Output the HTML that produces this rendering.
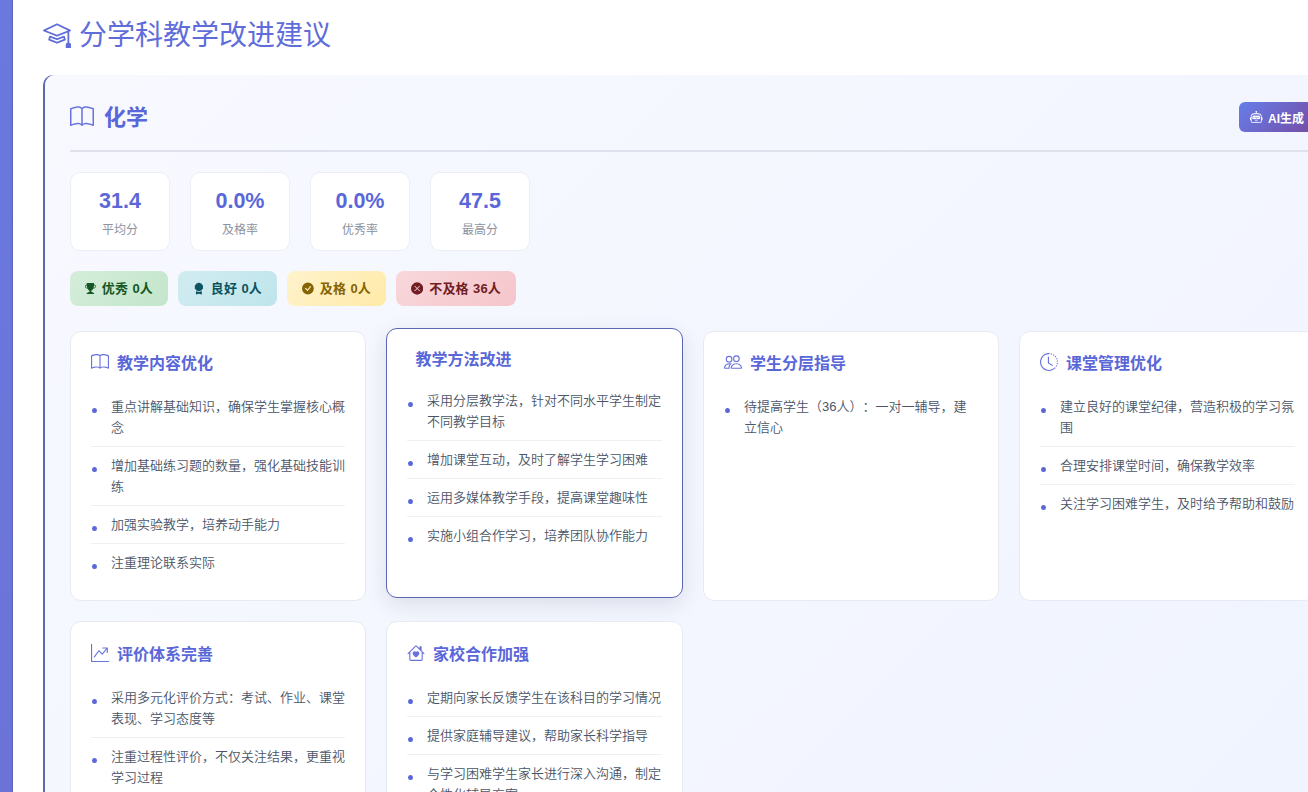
<!DOCTYPE html>
<html lang="zh-CN">
<head>
<meta charset="utf-8">
<title>分学科教学改进建议</title>
<style>
*{box-sizing:border-box;margin:0;padding:0}
html,body{width:1308px;height:792px;overflow:hidden}
body{position:relative;background:linear-gradient(180deg,#6a79de 0%,#6b73d8 100%);font-family:"Liberation Sans","Noto Sans CJK SC",sans-serif;color:#4a5568;text-spacing-trim:space-all}
svg{display:block;fill:currentColor}
.card h4 svg,.sub .ttl svg{color:#6873db}
.page{position:absolute;left:13px;top:0;width:1400px;height:792px;background:#fff;box-shadow:-1px 0 1px rgba(70,70,95,.3)}
.head{position:absolute;left:30px;top:14px;height:42px;display:flex;align-items:center;color:#5f6dda;white-space:nowrap}
.head svg{width:28px;height:28px;margin-right:8px;position:relative;top:-1px}
.head h2{font-size:28px;font-weight:400;line-height:42px;position:relative;top:1px}
.panel{position:absolute;left:32px;top:75px;width:1300px;height:760px;border-radius:10px;box-shadow:-2px 0 0 #5c68b0;background:linear-gradient(135deg,#f8f9ff 0%,#f0f4ff 100%)}
.sub{position:absolute;left:25px;top:0;right:0;height:77px;border-bottom:2px solid #dfe2ec}
.sub .ttl{position:absolute;left:0;top:28px;height:30px;display:flex;align-items:center;color:#5a67d8}
.sub .ttl svg{width:24px;height:24px;margin-right:10px;position:relative;top:-1px}
.sub .ttl b{font-size:22px;font-weight:700;line-height:30px}
.ai{position:absolute;left:1169px;top:27px;height:30px;padding:0 12px 0 11px;border-radius:6px;background:linear-gradient(135deg,#667eea 0%,#764ba2 100%);color:#fff;font-size:12px;font-weight:700;letter-spacing:0;display:flex;align-items:center;white-space:nowrap}
.ai svg{width:12.5px;height:12.5px;margin-right:5.5px;position:relative;top:.5px}
.stats{position:absolute;left:25px;top:97px;display:flex}
.stat{width:100px;height:79px;margin-right:20px;background:#fff;border:1px solid #eceef6;border-radius:10px;text-align:center}
.stat .v{margin-top:15px;font-size:21.5px;font-weight:700;line-height:26px;color:#5a67d8}
.stat .l{margin-top:8px;font-size:12px;line-height:16px;color:#8c929e}
.badges{position:absolute;left:25px;top:196px;display:flex}
.bd{height:35px;margin-right:10px;padding:0 15px;border-radius:8px;display:flex;align-items:center;font-size:13px;font-weight:700;word-spacing:.6px;white-space:nowrap}
.bd svg{width:13px;height:13px;margin-right:6px}
.bd span{position:relative;top:-1px;letter-spacing:.15px}
.b1{width:98px;background:linear-gradient(135deg,#d4edda,#c3e6cb);color:#155724}
.b2{width:99px;background:linear-gradient(135deg,#d1ecf1,#bee5eb);color:#0c5460}
.b3{width:99px;background:linear-gradient(135deg,#fff3cd,#ffeaa7);color:#856404}
.b4{width:120px;background:linear-gradient(135deg,#f8d7da,#f5c6cb);color:#721c24}
.card{position:absolute;width:297px;height:270px;background:#fff;border:1px solid #e8eaf1;border-radius:11px;padding:20px}
.card.hov{border-color:#5d66b4;box-shadow:0 7px 22px rgba(30,30,50,.11);transform:translateY(-3px)}
.card h4{height:24px;margin-bottom:12px;display:flex;align-items:center;color:#5a67d8;font-size:16px;font-weight:700;line-height:24px;white-space:nowrap}
.card h4 svg{width:18px;height:18px;margin-right:8px;position:relative;top:-2px}
.card.hov h4{height:21px;line-height:21px;padding-left:8.5px}
.card ul{list-style:none}
.card li{position:relative;padding:7.5px 0 8.5px 20px;border-bottom:1px solid #eff0f4;font-size:13px;font-weight:350;line-height:21px;color:#4a5568;white-space:nowrap}
.card li:last-child{border-bottom:0}
.card li::before{content:"";position:absolute;left:1px;top:20px;width:4.6px;height:5.2px;border-radius:50%;background:#5a67d8}
</style>
</head>
<body>
<div class="page">
  <div class="head">
    <svg viewBox="0 0 16 16"><path d="M8.211 2.047a.5.5 0 0 0-.422 0l-7.5 3.5a.5.5 0 0 0 .025.917l7.5 3a.5.5 0 0 0 .372 0L14 7.14V13a1 1 0 0 0-1 1v2h3v-2a1 1 0 0 0-1-1V6.739l.686-.275a.5.5 0 0 0 .025-.917l-7.5-3.5ZM8 8.46 1.758 5.965 8 3.052l6.242 2.913L8 8.46Z"/><path d="M4.176 9.032a.5.5 0 0 0-.656.327l-.5 1.7a.5.5 0 0 0 .294.605l4.5 1.8a.5.5 0 0 0 .372 0l4.5-1.8a.5.5 0 0 0 .294-.605l-.5-1.7a.5.5 0 0 0-.656-.327L8 10.466 4.176 9.032Zm-.068 1.873.22-.748 3.496 1.311a.5.5 0 0 0 .352 0l3.496-1.311.22.748L8 12.46l-3.892-1.556Z"/></svg>
    <h2>分学科教学改进建议</h2>
  </div>
  <div class="panel">
    <div class="sub">
      <div class="ttl">
        <svg viewBox="0 0 16 16"><path d="M1 2.828c.885-.37 2.154-.769 3.388-.893 1.33-.134 2.458.063 3.112.752v9.746c-.935-.53-2.12-.603-3.213-.493-1.18.12-2.37.461-3.287.811V2.828zm7.5-.141c.654-.689 1.782-.886 3.112-.752 1.234.124 2.503.523 3.388.893v9.923c-.918-.35-2.107-.692-3.287-.81-1.094-.111-2.278-.039-3.213.492V2.687zM8 1.783C7.015.936 5.587.81 4.287.94c-1.514.153-3.042.672-3.994 1.105A.5.5 0 0 0 0 2.5v11a.5.5 0 0 0 .707.455c.882-.4 2.303-.881 3.68-1.02 1.409-.142 2.59.087 3.223.877a.5.5 0 0 0 .78 0c.633-.79 1.814-1.019 3.222-.877 1.378.139 2.8.62 3.681 1.02A.5.5 0 0 0 16 13.5v-11a.5.5 0 0 0-.293-.455c-.952-.433-2.48-.952-3.994-1.105C10.413.809 8.985.936 8 1.783z"/></svg>
        <b>化学</b>
      </div>
      <div class="ai">
        <svg viewBox="0 0 16 16"><path d="M6 12.5a.5.5 0 0 1 .5-.5h3a.5.5 0 0 1 0 1h-3a.5.5 0 0 1-.5-.5ZM3 8.062C3 6.76 4.235 5.765 5.53 5.886a26.58 26.58 0 0 0 4.94 0C11.765 5.765 13 6.76 13 8.062v1.157a.933.933 0 0 1-.765.935c-.845.147-2.34.346-4.235.346-1.895 0-3.39-.2-4.235-.346A.933.933 0 0 1 3 9.219V8.062Zm4.542-.827a.25.25 0 0 0-.217.068l-.92.9a24.767 24.767 0 0 1-1.871-.183.25.25 0 0 0-.068.495c.55.076 1.232.149 2.02.193a.25.25 0 0 0 .189-.071l.754-.736.847 1.71a.25.25 0 0 0 .404.062l.932-.97a25.286 25.286 0 0 0 1.922-.188.25.25 0 0 0-.068-.495c-.538.074-1.207.145-1.98.189a.25.25 0 0 0-.166.076l-.754.785-.842-1.7a.25.25 0 0 0-.182-.135Z"/><path d="M8.5 1.866a1 1 0 1 0-1 0V3h-2A4.5 4.5 0 0 0 1 7.5V8a1 1 0 0 0-1 1v2a1 1 0 0 0 1 1v1a2 2 0 0 0 2 2h10a2 2 0 0 0 2-2v-1a1 1 0 0 0 1-1V9a1 1 0 0 0-1-1v-.5A4.5 4.5 0 0 0 10.5 3h-2V1.866ZM14 7.5V13a1 1 0 0 1-1 1H3a1 1 0 0 1-1-1V7.5A3.500 3.500 0 0 1 5.500 4h5A3.500 3.500 0 0 1 14 7.500Z"/></svg>
        <span>AI生成</span>
      </div>
    </div>
    <div class="stats">
      <div class="stat"><div class="v">31.4</div><div class="l">平均分</div></div>
      <div class="stat"><div class="v">0.0%</div><div class="l">及格率</div></div>
      <div class="stat"><div class="v">0.0%</div><div class="l">优秀率</div></div>
      <div class="stat"><div class="v">47.5</div><div class="l">最高分</div></div>
    </div>
    <div class="badges">
      <div class="bd b1"><svg viewBox="0 0 16 16"><path d="M2.500.500A.500.500 0 0 1 3 0h10a.500.500 0 0 1 .5.500c0 .538-.012 1.050-.034 1.536a3 3 0 1 1-1.133 5.890c-.790 1.865-1.878 2.777-2.833 3.011v2.173l1.425.356c.194.048.377.135.537.255L13.300 15.100a.500.500 0 0 1-.300.900H3a.500.500 0 0 1-.300-.900l1.838-1.379c.160-.120.343-.207.537-.255L6.500 13.110v-2.173c-.955-.234-2.043-1.146-2.833-3.012a3 3 0 1 1-1.132-5.890A33.076 33.076 0 0 1 2.500.500zm.099 2.540a2 2 0 0 0 .720 3.935c-.333-1.050-.588-2.346-.720-3.935zm10.083 3.935a2 2 0 0 0 .720-3.935c-.133 1.590-.388 2.885-.720 3.935z"/></svg><span>优秀 0人</span></div>
      <div class="bd b2"><svg viewBox="0 0 16 16"><path d="m8 0 1.669.864 1.858.282.842 1.680 1.337 1.320L13.400 6l.306 1.854-1.337 1.320-.842 1.680-1.858.282L8 12l-1.669-.864-1.858-.282-.842-1.680-1.337-1.320L2.600 6l-.306-1.854 1.337-1.320.842-1.680L6.331.864 8 0z"/><path d="M4 11.794V16l4-1 4 1v-4.206l-2.018.306L8 13.126 6.018 12.100 4 11.794z"/></svg><span>良好 0人</span></div>
      <div class="bd b3"><svg viewBox="0 0 16 16"><path d="M16 8A8 8 0 1 1 0 8a8 8 0 0 1 16 0zm-3.970-3.030a.750.750 0 0 0-1.080.022L7.477 9.417 5.384 7.323a.750.750 0 0 0-1.060 1.060L6.970 11.030a.750.750 0 0 0 1.079-.020l3.992-4.990a.750.750 0 0 0-.010-1.050z"/></svg><span>及格 0人</span></div>
      <div class="bd b4"><svg viewBox="0 0 16 16"><path d="M16 8A8 8 0 1 1 0 8a8 8 0 0 1 16 0zM5.354 4.646a.500.500 0 1 0-.708.708L7.293 8l-2.647 2.646a.500.500 0 0 0 .708.708L8 8.707l2.646 2.647a.500.500 0 0 0 .708-.708L8.707 8l2.647-2.646a.500.500 0 0 0-.708-.708L8 7.293 5.354 4.646z"/></svg><span>不及格 36人</span></div>
    </div>
    <div class="card" style="left:25px;width:296px;top:256px"><h4><svg viewBox="0 0 16 16"><path d="M1 2.828c.885-.37 2.154-.769 3.388-.893 1.33-.134 2.458.063 3.112.752v9.746c-.935-.53-2.12-.603-3.213-.493-1.18.12-2.37.461-3.287.811V2.828zm7.5-.141c.654-.689 1.782-.886 3.112-.752 1.234.124 2.503.523 3.388.893v9.923c-.918-.35-2.107-.692-3.287-.81-1.094-.111-2.278-.039-3.213.492V2.687zM8 1.783C7.015.936 5.587.81 4.287.94c-1.514.153-3.042.672-3.994 1.105A.5.5 0 0 0 0 2.5v11a.5.5 0 0 0 .707.455c.882-.4 2.303-.881 3.68-1.02 1.409-.142 2.59.087 3.223.877a.5.5 0 0 0 .78 0c.633-.79 1.814-1.019 3.222-.877 1.378.139 2.8.62 3.681 1.02A.5.5 0 0 0 16 13.5v-11a.5.5 0 0 0-.293-.455c-.952-.433-2.48-.952-3.994-1.105C10.413.809 8.985.936 8 1.783z"/></svg><span>教学内容优化</span></h4><ul><li>重点讲解基础知识，确保学生掌握核心概<br>念</li><li>增加基础练习题的数量，强化基础技能训<br>练</li><li>加强实验教学，培养动手能力</li><li>注重理论联系实际</li></ul></div>
    <div class="card hov" style="left:341px;width:297px;top:256px"><h4><span>教学方法改进</span></h4><ul><li>采用分层教学法，针对不同水平学生制定<br>不同教学目标</li><li>增加课堂互动，及时了解学生学习困难</li><li>运用多媒体教学手段，提高课堂趣味性</li><li>实施小组合作学习，培养团队协作能力</li></ul></div>
    <div class="card" style="left:658px;width:296px;top:256px"><h4><svg viewBox="0 0 16 16"><path d="M15 14s1 0 1-1-1-4-5-4-5 3-5 4 1 1 1 1h8Zm-7.978-1A.261.261 0 0 1 7 12.996c.001-.264.167-1.03.76-1.72C8.312 10.629 9.282 10 11 10c1.717 0 2.687.63 3.24 1.276.593.69.758 1.457.76 1.72l-.008.002a.274.274 0 0 1-.014.002H7.022ZM11 7a2 2 0 1 0 0-4 2 2 0 0 0 0 4Zm3-2a3 3 0 1 1-6 0 3 3 0 0 1 6 0ZM6.936 9.28a5.88 5.88 0 0 0-1.23-.247A7.350 7.350 0 0 0 5 9c-4 0-5 3-5 4 0 .667.333 1 1 1h4.216A2.238 2.238 0 0 1 5 13c0-1.010.377-2.042 1.090-2.904.243-.294.526-.569.846-.816ZM4.920 10A5.493 5.493 0 0 0 4 13H1c0-.260.164-1.030.760-1.724.545-.636 1.492-1.256 3.160-1.275ZM1.500 5.500a3 3 0 1 1 6 0 3 3 0 0 1-6 0Zm3-2a2 2 0 1 0 0 4 2 2 0 0 0 0-4Z"/></svg><span>学生分层指导</span></h4><ul><li>待提高学生（36人）：一对一辅导，建<br>立信心</li></ul></div>
    <div class="card" style="left:974px;width:297px;top:256px"><h4><svg viewBox="0 0 16 16"><path d="M8.515 1.019A7 7 0 0 0 8 1V0a8 8 0 0 1 .589.022l-.074.997zm2.004.45a7.003 7.003 0 0 0-.985-.299l.219-.976c.383.086.76.2 1.126.342l-.36.933zm1.37.71a7.010 7.010 0 0 0-.439-.270l.493-.870a8.025 8.025 0 0 1 .979.654l-.615.789a6.996 6.996 0 0 0-.418-.302zm1.834 1.790a6.990 6.990 0 0 0-.653-.796l.724-.690c.270.285.520.590.747.910l-.818.576zm.744 1.352a7.080 7.080 0 0 0-.214-.468l.893-.450a7.976 7.976 0 0 1 .450 1.088l-.950.313a7.023 7.023 0 0 0-.179-.483zm.530 2.507a6.991 6.991 0 0 0-.100-1.025l.985-.170c.067.386.106.778.116 1.170l-1 .025zm-.131 1.538c.033-.170.060-.339.081-.510l.993.123a7.957 7.957 0 0 1-.230 1.155l-.964-.267c.046-.165.086-.332.120-.501zm-.952 2.379c.184-.290.346-.594.486-.908l.914.405c-.160.360-.345.706-.555 1.038l-.845-.535zm-.964 1.205c.122-.122.239-.248.350-.378l.758.653a8.073 8.073 0 0 1-.401.432l-.707-.707z"/><path d="M8 1a7 7 0 1 0 4.950 11.950l.707.707A8.001 8.001 0 1 1 8 0v1z"/><path d="M7.500 3a.500.500 0 0 1 .500.500v5.210l3.248 1.856a.500.500 0 0 1-.496.868l-3.500-2A.500.500 0 0 1 7 9V3.500a.500.500 0 0 1 .500-.500z"/></svg><span>课堂管理优化</span></h4><ul><li>建立良好的课堂纪律，营造积极的学习氛<br>围</li><li>合理安排课堂时间，确保教学效率</li><li>关注学习困难学生，及时给予帮助和鼓励</li></ul></div>
    <div class="card" style="left:25px;width:296px;top:546px;padding-top:21px"><h4><svg viewBox="0 0 16 16"><path fill-rule="evenodd" d="M0 0h1v15h15v1H0V0Zm10 3.500a.500.500 0 0 1 .500-.500h4a.500.500 0 0 1 .500.500v4a.500.500 0 0 1-1 0V4.900l-3.613 4.417a.500.500 0 0 1-.740.037L7.060 6.767l-3.656 5.027a.500.500 0 0 1-.808-.588l4-5.500a.500.500 0 0 1 .758-.060l2.609 2.610L13.445 4H10.500a.500.500 0 0 1-.500-.500Z"/></svg><span>评价体系完善</span></h4><ul><li>采用多元化评价方式：考试、作业、课堂<br>表现、学习态度等</li><li>注重过程性评价，不仅关注结果，更重视<br>学习过程</li><li>建立学习档案，跟踪学生进步情况</li></ul></div>
    <div class="card" style="left:341px;width:297px;top:546px;padding-top:21px"><h4><svg viewBox="0 0 16 16"><path d="M8 6.982C9.664 5.309 13.825 8.236 8 12 2.175 8.236 6.336 5.309 8 6.982Z"/><path d="M8.707 1.500a1 1 0 0 0-1.414 0L.646 8.146a.500.500 0 0 0 .708.707L2 8.207V13.500A1.500 1.500 0 0 0 3.500 15h9a1.500 1.500 0 0 0 1.500-1.500V8.207l.646.646a.500.500 0 0 0 .708-.707L13 5.793V2.500a.500.500 0 0 0-.500-.500h-1a.500.500 0 0 0-.500.500v1.293L8.707 1.500ZM13 7.207V13.500a.500.500 0 0 1-.500.500h-9a.500.500 0 0 1-.500-.500V7.207l5-5 5 5Z"/></svg><span>家校合作加强</span></h4><ul><li>定期向家长反馈学生在该科目的学习情况</li><li>提供家庭辅导建议，帮助家长科学指导</li><li>与学习困难学生家长进行深入沟通，制定<br>个性化辅导方案</li></ul></div>
  </div>
</div>
</body>
</html>
